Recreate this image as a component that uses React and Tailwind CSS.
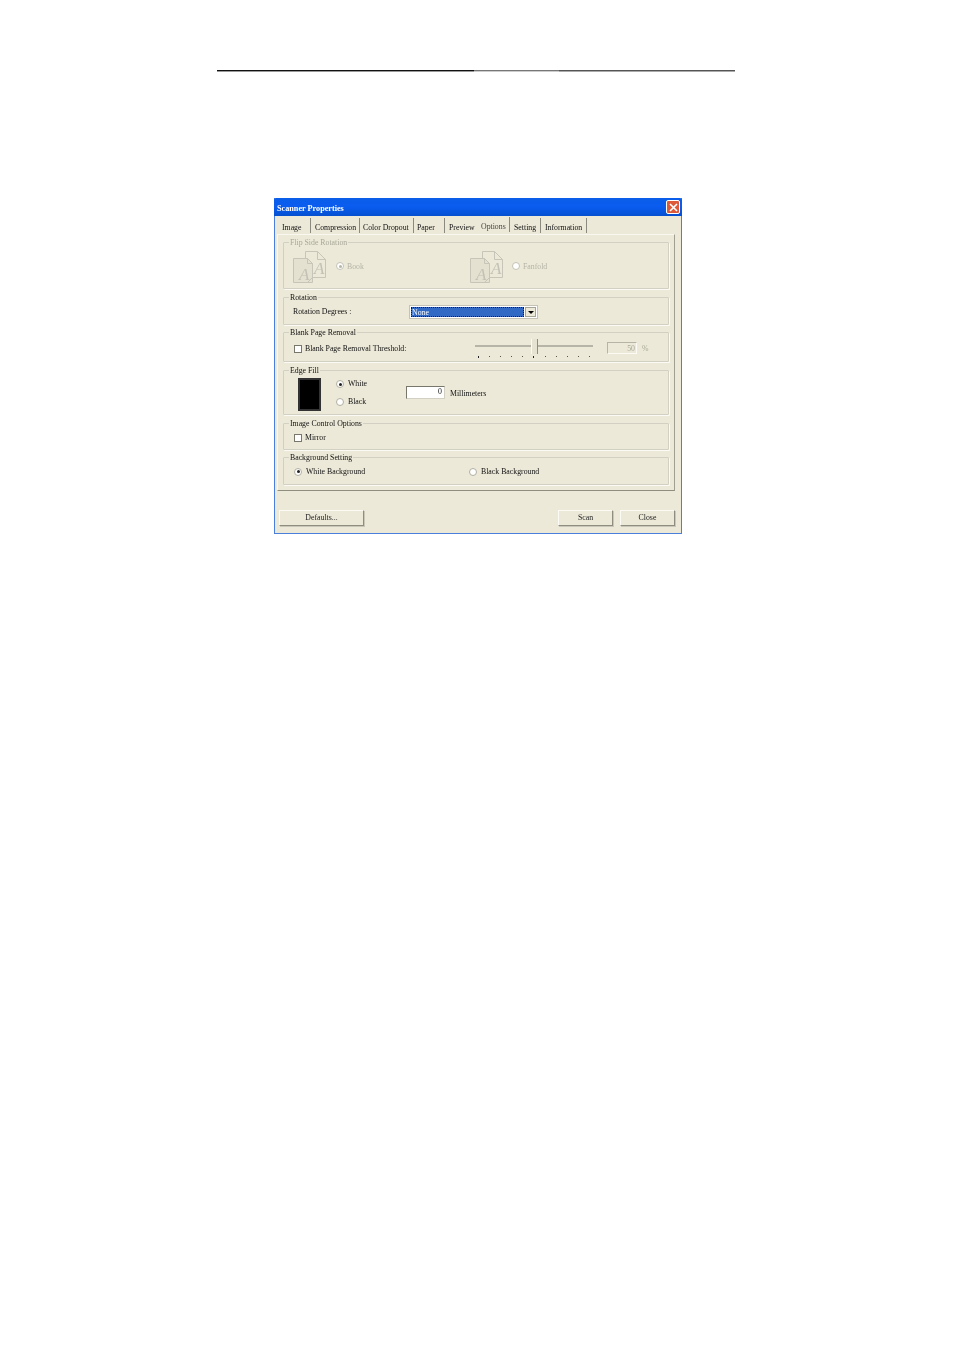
import React from 'react';

const tabs = [
  { label: 'Image', width: 'w-[29px]', pad: 'pl-0' },
  { label: 'Compression', width: 'w-[49px]', pad: 'pl-[4px]' },
  { label: 'Color Dropout', width: 'w-[54px]', pad: 'pl-[3px]' },
  { label: 'Paper', width: 'w-[31px]', pad: 'pl-[3px]' },
  { label: 'Preview', width: 'w-[33px]', pad: 'pl-[4px]', noRule: true },
  { label: 'Options', width: 'w-[32px]', pad: 'pl-[3px]', active: true },
  { label: 'Setting', width: 'w-[31px]', pad: 'pl-[4px]' },
  { label: 'Information', width: 'w-[46px]', pad: 'pl-[4px]' },
];

const ticks = [0, 1, 2, 3, 4, 5, 6, 7, 8, 9, 10];

// group box with the caption sitting on the top border
const Group = ({ title, height, disabled, children }) => (
  <div className={`${height} border border-[#d2d0c2] rounded-[1px] shadow-[1px_1px_0_#fbfaf5]`}>
    <div className={`-mt-[6px] ml-[5px] w-fit h-[11px] leading-[11px] px-[1px] bg-[#ece9d8] ${disabled ? 'text-[#a8a899]' : 'text-[#111]'}`}>
      {title}
    </div>
    {children}
  </div>
);

const Radio = ({ checked, disabled }) => (
  <span className={`w-[8px] h-[8px] shrink-0 rounded-full border flex items-center justify-center bg-white ${disabled ? 'border-[#c4c3b6]' : 'border-[#b0afa2]'}`}>
    {checked && <span className={`w-[3px] h-[3px] rounded-full ${disabled ? 'bg-[#b5b5a8]' : 'bg-[#222]'}`} />}
  </span>
);

const Checkbox = () => (
  <span className="w-[8px] h-[8px] shrink-0 border border-[#77776c] bg-white" />
);

const PagesIcon = () => (
  <svg width="35" height="33" viewBox="0 0 35 33" className="shrink-0" fill="none" stroke="#c6c5b8" strokeWidth="1">
    <path d="M13.5 0.5h12l8 8v18h-20z" fill="#ece9d8" />
    <path d="M25.5 0.5v8h8" />
    <path d="M1.5 7.5h14l5 5v19h-19z" fill="#e4e1d0" />
    <path d="M15.5 7.5v5h5" />
    <path d="M20.5 26.5l-5 5" />
    <text x="7" y="29" fontFamily="Liberation Serif, serif" fontStyle="italic" fontSize="17" fill="#c2c1b4" stroke="none">A</text>
    <text x="22" y="23" fontFamily="Liberation Serif, serif" fontStyle="italic" fontSize="17" fill="#c2c1b4" stroke="none">A</text>
  </svg>
);

const Button = ({ width, margin, children }) => (
  <div className={`${width} ${margin} h-[16px] leading-[14px] text-center text-[#222] bg-[#ece9d8] border border-t-[#fbfaf5] border-l-[#fbfaf5] border-r-[#8e8d80] border-b-[#8e8d80] shadow-[1px_1px_0_#c8c7b8]`}>
    {children}
  </div>
);

export default function App() {
  return (
    <div className="w-[954px] h-[1351px] bg-white overflow-hidden text-[7.8px] text-[#111] font-['Liberation_Serif',serif]">
      {/* rule at the top of the page */}
      <div className="flex ml-[217px] pt-[70px] h-[72px]">
        <div className="w-[257px] h-[2px] border-t border-[#111] bg-[#999]" />
        <div className="w-[85px] h-[2px] border-t border-[#777] bg-[#ccc]" />
        <div className="w-[176px] h-[2px] border-t border-[#555] bg-[#aaa]" />
      </div>

      <div className="ml-[274px] mt-[126px] w-[408px] h-[336px] bg-[#ece9d8] border-x border-b border-[#4a7fdc] flex flex-col blur-[0.3px]">
        <div className="h-[18px] -mx-[1px] flex items-center justify-between pl-[3px] pr-[2px] bg-gradient-to-b from-[#0a5ee8] via-[#0a5cf0] to-[#0450d0] rounded-t-[2px]">
          <span className="pt-[4px] text-white font-bold text-[8.2px]">Scanner Properties</span>
          <span className="w-[14px] h-[14px] flex items-center justify-center rounded-[2px] border border-white bg-[#dc5a3a]">
            <svg width="9" height="9" viewBox="0 0 9 9" stroke="#fff" strokeWidth="1.6">
              <path d="M1 1l7 7M8 1l-7 7" />
            </svg>
          </span>
        </div>

        <div className="flex h-[16px] ml-[7px] mt-[2px]">
          {tabs.map((tab) => (
            <div
              key={tab.label}
              className={`${tab.width} ${tab.pad} shrink-0 h-[15px] leading-[19px] whitespace-nowrap ${tab.noRule ? '' : 'border-r border-[#8a8a7e]'} ${tab.active ? '-mt-[1px] text-[#444] bg-[#ece9d8]' : ''}`}
            >
              {tab.label}
            </div>
          ))}
        </div>

        <div className="ml-[2px] w-[398px] h-[257px] shrink-0 border border-t-[#f8f7f0] border-l-[#f8f7f0] border-r-[#a09f90] border-b-[#8e8d80] px-[5px] pt-[7px] flex flex-col">
          <Group title="Flip Side Rotation" height="h-[47px] shrink-0" disabled>
            <div className="flex items-start h-[36px] text-[#b4b4a6]">
              <div className="ml-[8px] mt-[3px] shrink-0"><PagesIcon /></div>
              <div className="ml-[9px] mt-[14px]"><Radio checked disabled /></div>
              <span className="ml-[3px] w-[122px] shrink-0 leading-[11px] mt-[13px]">Book</span>
              <div className="mt-[3px] shrink-0"><PagesIcon /></div>
              <div className="ml-[8px] mt-[14px]"><Radio disabled /></div>
              <span className="ml-[3px] leading-[11px] mt-[13px]">Fanfold</span>
            </div>
          </Group>

          <div className="mt-[8px]">
            <Group title="Rotation" height="h-[28px]">
              <div className="flex items-center h-[16px] mt-[1px] pl-[9px]">
                <span className="w-[116px] shrink-0">Rotation Degrees :</span>
                <div className="w-[129px] h-[14px] flex items-center bg-white border border-[#c4c3b6] p-[1px]">
                  <div className="flex-1 h-full leading-[10px] border border-dotted border-[#1a1a1a] bg-[#316ac5] text-white">None</div>
                  <div className="w-[11px] h-full ml-[1px] flex items-center justify-center bg-[#ece9d8] border border-[#a5a597]">
                    <span className="w-0 h-0 border-x-[3px] border-x-transparent border-t-[3px] border-t-black" />
                  </div>
                </div>
              </div>
            </Group>
          </div>

          <div className="mt-[7px]">
            <Group title="Blank Page Removal" height="h-[30px]">
              <div className="flex items-center h-[19px] mt-[1px] pl-[10px]">
                <Checkbox />
                <span className="ml-[3px] w-[170px] shrink-0">Blank Page Removal Threshold:</span>
                <div className="w-[118px] shrink-0 relative h-[19px]">
                  <div className="mt-[6px] h-[2px] bg-[#b5b4a6]" />
                  <div className="absolute left-[56px] top-[0px] w-[7px] h-[15px] bg-[#e6e3d3] border-l border-l-[#fbfaf5] border-r border-r-[#8e8d80]" />
                  <div className="flex justify-between mt-[9px] px-[3px]">
                    {ticks.map((t) => (
                      <span key={t} className={`w-[1px] ${t === 0 || t === 5 ? 'h-[2px] bg-[#222]' : 'h-[1px] bg-[#55554c]'}`} />
                    ))}
                  </div>
                </div>
                <div className="ml-[14px] w-[30px] h-[12px] -mt-[1px] leading-[11px] text-right pr-[1px] text-[#a8a899] border border-t-[#b5b4a6] border-l-[#b5b4a6] border-r-[#fbfaf5] border-b-[#fbfaf5]">50</div>
                <span className="ml-[5px] text-[#a8a899]">%</span>
              </div>
            </Group>
          </div>

          <div className="mt-[8px]">
            <Group title="Edge Fill" height="h-[45px]">
              <div className="flex h-[38px] pl-[14px]">
                <div className="w-[23px] h-[33px] mt-[2px] shrink-0 bg-black border-[2px] border-[#333] outline outline-1 outline-[#ece9d8]" />
                <div className="ml-[15px] w-[70px] shrink-0 flex flex-col mt-[2px]">
                  <div className="flex items-center gap-[4px] h-[12px]"><Radio checked /><span>White</span></div>
                  <div className="flex items-center gap-[4px] h-[12px] mt-[6px]"><Radio /><span>Black</span></div>
                </div>
                <div className="w-[39px] h-[13px] mt-[10px] shrink-0 leading-[10px] text-right pr-[2px] bg-white border border-t-[#77776c] border-l-[#77776c] border-r-[#d2d0c2] border-b-[#d2d0c2]">0</div>
                <span className="ml-[5px] mt-[12px] leading-[11px]">Millimeters</span>
              </div>
            </Group>
          </div>

          <div className="mt-[8px]">
            <Group title="Image Control Options" height="h-[27px]">
              <div className="flex items-center h-[16px] mt-[1px] pl-[10px]">
                <Checkbox />
                <span className="ml-[3px]">Mirror</span>
              </div>
            </Group>
          </div>

          <div className="mt-[7px]">
            <Group title="Background Setting" height="h-[28px]">
              <div className="flex items-center h-[17px] pl-[10px]">
                <Radio checked />
                <span className="ml-[4px] w-[163px] shrink-0">White Background</span>
                <Radio />
                <span className="ml-[4px]">Black Background</span>
              </div>
            </Group>
          </div>
        </div>

        <div className="flex mt-[19px] pl-[4px]">
          <Button width="w-[85px]" margin="">Defaults...</Button>
          <Button width="w-[55px]" margin="ml-[194px]">Scan</Button>
          <Button width="w-[55px]" margin="ml-[7px]">Close</Button>
        </div>
      </div>
    </div>
  );
}
